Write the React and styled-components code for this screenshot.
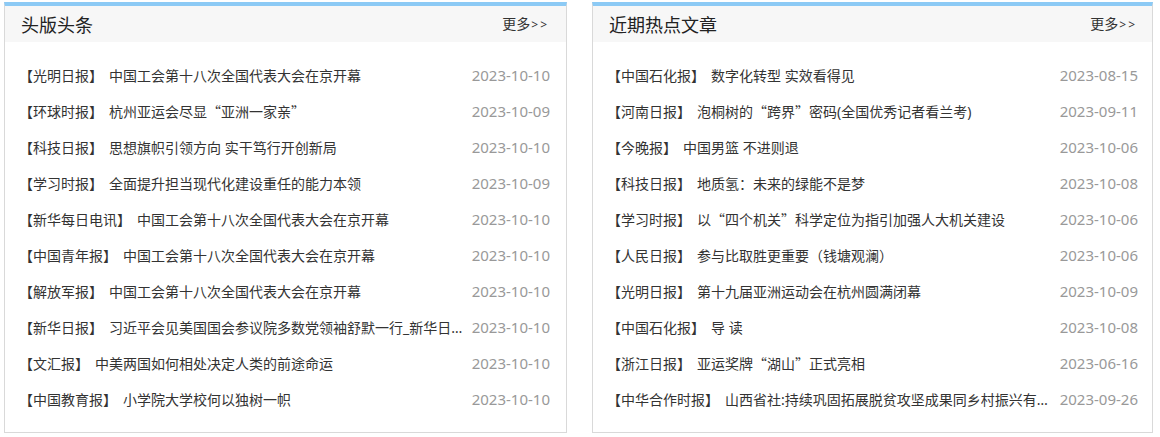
import React from "react";
import styled, { createGlobalStyle } from "styled-components";

const Global = createGlobalStyle`
  html, body { margin: 0; padding: 0; background: #fff; }
  body { font-family: "Noto Sans", "Noto Sans CJK SC", sans-serif; color: #333; }
  * { box-sizing: border-box; }
`;

const Page = styled.div`
  display: flex;
  gap: 25px;
  padding: 2px 0 0 4px;
  width: 1160px;
`;

const Panel = styled.section`
  width: ${(p) => p.$w}px;
  height: 431px;
  border: 1px solid #d9d9d9;
  border-top: 4px solid #8ccaf5;
  display: flex;
  flex-direction: column;
`;

const Header = styled.div`
  height: 36px;
  background: #f7f7f7;
  display: flex;
  align-items: center;
  justify-content: space-between;
  padding: 0 ${(p) => p.$pr}px 0 16px;
`;

const Title = styled.h2`
  margin: 0;
  font-family: "Noto Sans CJK SC", sans-serif;
  font-size: 18px;
  font-weight: normal;
  color: #222;
  line-height: 36px;
`;

const More = styled.a`
  font-size: 14px;
  color: #333;
  text-decoration: none;
  line-height: 36px;
`;

const Arrows = styled.span`
  font-size: 12px;
  letter-spacing: 2px;
  margin-left: 1px;
`;

const List = styled.ul`
  list-style: none;
  margin: 0;
  padding: 15px 0;
`;

const Row = styled.li`
  height: 36px;
  display: flex;
  align-items: center;
  padding: 0 ${(p) => p.$pr}px 0 14px;
  font-size: 14px;
  gap: 8px;
`;

const Headline = styled.span`
  flex: 1;
  min-width: 0;
  white-space: nowrap;
  overflow: hidden;
  text-overflow: ellipsis;
  color: #333;
`;

const Source = styled.span`
  margin-right: 6px;
`;

const Quote = styled.span`
  font-family: "Noto Sans CJK SC", sans-serif;
`;

const DateText = styled.span`
  flex-shrink: 0;
  font-family: "Noto Sans", "Open Sans", sans-serif;
  font-size: 15px;
  color: #999;
`;

const left = [
  ["光明日报", "中国工会第十八次全国代表大会在京开幕", "2023-10-10"],
  ["环球时报", "杭州亚运会尽显“亚洲一家亲”", "2023-10-09"],
  ["科技日报", "思想旗帜引领方向 实干笃行开创新局", "2023-10-10"],
  ["学习时报", "全面提升担当现代化建设重任的能力本领", "2023-10-09"],
  ["新华每日电讯", "中国工会第十八次全国代表大会在京开幕", "2023-10-10"],
  ["中国青年报", "中国工会第十八次全国代表大会在京开幕", "2023-10-10"],
  ["解放军报", "中国工会第十八次全国代表大会在京开幕", "2023-10-10"],
  ["新华日报", "习近平会见美国国会参议院多数党领袖舒默一行_新华日报网", "2023-10-10"],
  ["文汇报", "中美两国如何相处决定人类的前途命运", "2023-10-10"],
  ["中国教育报", "小学院大学校何以独树一帜", "2023-10-10"],
];

const right = [
  ["中国石化报", "数字化转型 实效看得见", "2023-08-15"],
  ["河南日报", "泡桐树的“跨界”密码(全国优秀记者看兰考)", "2023-09-11"],
  ["今晚报", "中国男篮 不进则退", "2023-10-06"],
  ["科技日报", "地质氢：未来的绿能不是梦", "2023-10-08"],
  ["学习时报", "以“四个机关”科学定位为指引加强人大机关建设", "2023-10-06"],
  ["人民日报", "参与比取胜更重要（钱塘观澜）", "2023-10-06"],
  ["光明日报", "第十九届亚洲运动会在杭州圆满闭幕", "2023-10-09"],
  ["中国石化报", "导 读", "2023-10-08"],
  ["浙江日报", "亚运奖牌“湖山”正式亮相", "2023-06-16"],
  ["中华合作时报", "山西省社:持续巩固拓展脱贫攻坚成果同乡村振兴有效衔接", "2023-09-26"],
];

function withQuotes(text) {
  return text.split(/([“”])/).map((part, i) =>
    part === "“" || part === "”" ? <Quote key={i}>{part}</Quote> : part
  );
}

function NewsPanel({ title, items, width, pr }) {
  return (
    <Panel $w={width}>
      <Header $pr={pr}>
        <Title>{title}</Title>
        <More href="#">
          更多<Arrows>&gt;&gt;</Arrows>
        </More>
      </Header>
      <List>
        {items.map(([src, text, date], i) => (
          <Row key={i} $pr={pr - 1}>
            <Headline>
              <Source>【{src}】</Source>
              {withQuotes(text)}
            </Headline>
            <DateText>{date}</DateText>
          </Row>
        ))}
      </List>
    </Panel>
  );
}

export default function App() {
  return (
    <>
      <Global />
      <Page>
        <NewsPanel title="头版头条" items={left} width={563} pr={17} />
        <NewsPanel title="近期热点文章" items={right} width={561} pr={15} />
      </Page>
    </>
  );
}
